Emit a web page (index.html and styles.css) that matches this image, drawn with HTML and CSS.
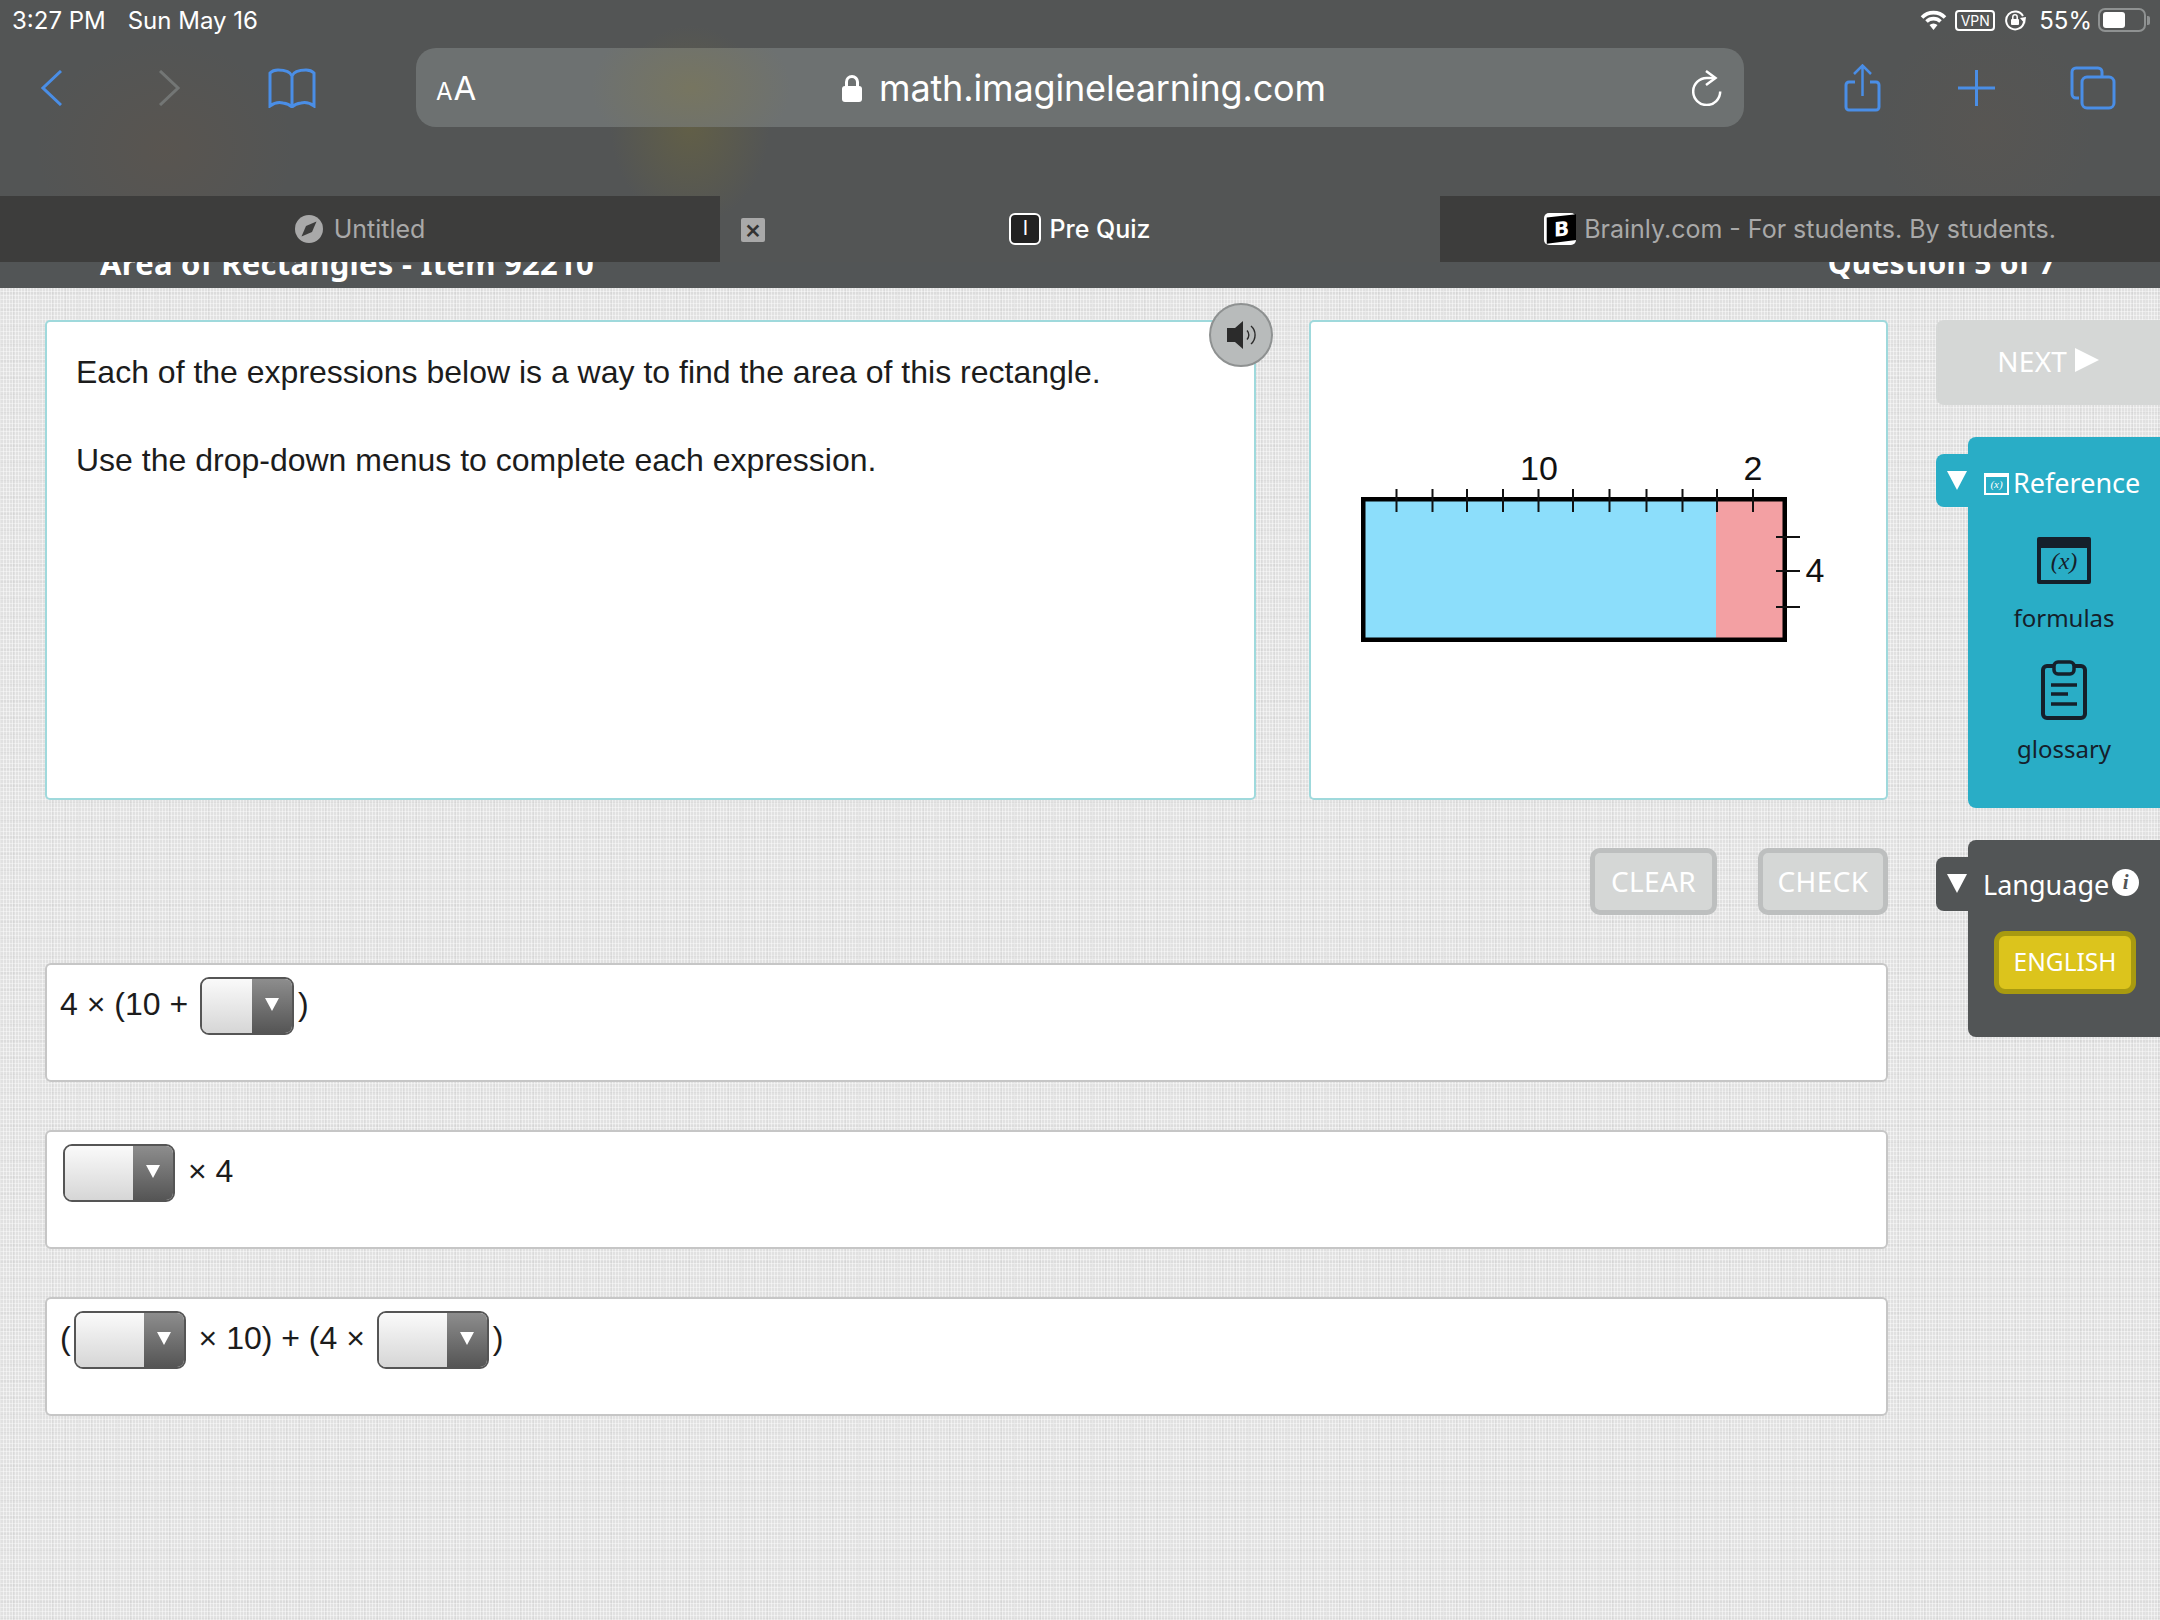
FILE: index.html
```html
<!DOCTYPE html>
<html lang="en">
<head>
<meta charset="utf-8">
<title>Pre Quiz</title>
<link rel="stylesheet" href="styles.css">
</head>
<body>
<div class="chrome">
  <div class="status">
    <span class="clock">3:27 PM</span><span class="date">Sun May 16</span>
    <div class="status-right">
      <svg class="wifi" viewBox="0 0 27 20"><path d="M2 7.500a16 16 0 0 1 23 0M6.500 11.500a10 10 0 0 1 14 0" fill="none" stroke="#fff" stroke-width="3.600"/><path d="M9.500 15a6 6 0 0 1 8 0L13.500 20z" fill="#fff"/></svg>
      <span class="vpn">VPN</span>
      <svg class="rot" viewBox="0 0 22 22"><path d="M19 7A9 9 0 1 0 20 13" fill="none" stroke="#fff" stroke-width="2"/><path d="M16 9l6-1-1 7z" fill="#fff"/><rect x="7" y="10" width="8" height="6" rx="1" fill="#fff"/><path d="M8.800 10V8a2.200 2.200 0 0 1 4.400 0v2" fill="none" stroke="#fff" stroke-width="1.500"/></svg>
      <span class="pct">55%</span>
      <span class="battery"><span class="battery-fill"></span></span><span class="nub"></span>
    </div>
  </div>
  <div class="toolbar">
    <svg class="tb back" viewBox="0 0 21 36"><path d="M20 1 2 18l18 17" fill="none" stroke="#4a8ee6" stroke-width="3"/></svg>
    <svg class="tb forward" viewBox="0 0 22 36"><path d="M2 1l18 17L2 35" fill="none" stroke="#737675" stroke-width="3"/></svg>
    <svg class="tb book" viewBox="0 0 48 40"><path d="M24 8C22 3 16 2 10 2 7 2 4 3 2 5v33c4-3 9-4 13-3 4 .5 7 2 9 4 2-2 5-3.500 9-4 4-1 9 0 13 3V5c-2-2-5-3-8-3-6 0-12 1-14 6zM24 8v31" fill="none" stroke="#4a8ee6" stroke-width="3"/></svg>
    <div class="urlbar">
      <span class="aa"><span class="aa-s">A</span>A</span>
      <span class="url"><svg class="lock" viewBox="0 0 20 28"><path d="M4.500 13V8a5.500 5.500 0 0 1 11 0v5" fill="none" stroke="#fff" stroke-width="3"/><rect y="12" width="20" height="16" rx="3" fill="#fff"/></svg>math.imaginelearning.com</span>
      <svg class="reload" viewBox="0 0 30 36"><path d="M23 8H14.700A13.500 13.500 0 1 0 28.200 21.500" fill="none" stroke="#fff" stroke-width="2.500"/><path d="M14 1l9.500 7L14 15" fill="none" stroke="#fff" stroke-width="2.500"/></svg>
    </div>
    <svg class="tb share" viewBox="0 0 37 48"><path d="M11 18H5a3 3 0 0 0-3 3v22a3 3 0 0 0 3 3h27a3 3 0 0 0 3-3V21a3 3 0 0 0-3-3h-6" fill="none" stroke="#4a8ee6" stroke-width="3"/><path d="M18.500 32V2M10 10l8.500-8.500L27 10" fill="none" stroke="#4a8ee6" stroke-width="2.500"/></svg>
    <svg class="tb plus" viewBox="0 0 37 36"><path d="M18.500 0v36M0 18h37" stroke="#4a8ee6" stroke-width="3"/></svg>
    <svg class="tb tabs-ic" viewBox="0 0 46 44"><path d="M9 32H6a4 4 0 0 1-4-4V6a4 4 0 0 1 4-4h22a4 4 0 0 1 4 4v4" fill="none" stroke="#4a8ee6" stroke-width="3"/><rect x="12" y="11" width="32" height="31" rx="5" fill="none" stroke="#4a8ee6" stroke-width="3"/></svg>
  </div>
  <div class="tabs">
    <div class="tab off">
      <svg class="t-ic" viewBox="0 0 28 28"><circle cx="14" cy="14" r="14" fill="#a9a9a9"/><path d="M21.500 6.500 17 17 6.500 21.500 11 11z" fill="#3d3d3c"/></svg>Untitled
    </div>
    <div class="tab on">
      <span class="close">×</span>
      <span class="quiz-ic">I</span>Pre Quiz
    </div>
    <div class="tab off">
      <span class="brainly-ic"><span class="brainly-band"><span class="brainly-b">B</span></span></span>Brainly.com - For students. By students.
    </div>
  </div>
</div>
<header class="titlebar"><span>Area of Rectangles - Item 92210</span><span class="qnum">Question 5 of 7</span></header>
<main class="main">
  <section class="content">
    <div class="panels">
      <div class="panel prompt">
        <p>Each of the expressions below is a way to find the area of this rectangle.</p>
        <p>Use the drop-down menus to complete each expression.</p>
        <div class="speaker">
          <svg viewBox="0 0 29 28" class="speaker-ic"><path d="M0 7h8l8-7v28l-8-7H0z" fill="#2b2b2b"/><path d="M20 9.500a6.500 6.500 0 0 1 0 9M24 5a12 12 0 0 1 0 18" fill="none" stroke="#2b2b2b" stroke-width="1.400"/></svg>
        </div>
      </div>
      <div class="panel figure">
        <svg class="diagram" viewBox="1311 322 575 476">
          <rect x="1363" y="499" width="353" height="141" fill="#8cdefb"/>
          <rect x="1716" y="499" width="69" height="141" fill="#f3a0a3"/>
          <rect x="1363.250" y="499.250" width="421.500" height="140.500" fill="none" stroke="#000" stroke-width="4.500"/>
          <path d="M1396.500 489v23M1432.500 489v23M1467 489v23M1503 489v23M1538.500 489v23M1573 489v23M1609.500 489v23M1646.500 489v23M1682.500 489v23M1717 489v23M1753 489v23M1776 537h24M1776 571h24M1776 607h24" stroke="#111" stroke-width="2"/>
          <text x="1539" y="480" class="fig-label">10</text>
          <text x="1753" y="480" class="fig-label">2</text>
          <text x="1815" y="582" class="fig-label">4</text>
        </svg>
      </div>
    </div>
    <div class="actions">
      <button class="act clear">CLEAR</button>
      <button class="act check">CHECK</button>
    </div>
    <div class="answers">
      <div class="answer">4 × (10 + <span class="dd narrow"><span class="dd-l"></span><span class="dd-r"></span></span>)</div>
      <div class="answer"><span class="dd"><span class="dd-l"></span><span class="dd-r"></span></span> × 4</div>
      <div class="answer">(<span class="dd"><span class="dd-l"></span><span class="dd-r"></span></span> × 10) + (4 × <span class="dd"><span class="dd-l"></span><span class="dd-r"></span></span>)</div>
    </div>
  </section>
  <aside class="side">
    <button class="next">NEXT <span class="next-tri"></span></button>
    <div class="drawer ref">
      <div class="handle"><span class="tri"></span></div>
      <div class="sheet">
        <h2 class="sheet-title ref-title"><span class="mini-x"><i>(x)</i></span>Reference</h2>
        <div class="tool">
          <span class="formula-ic"><i>(x)</i></span>
          <span class="tool-name">formulas</span>
        </div>
        <div class="tool tool-g">
          <svg class="clip" viewBox="0 0 46 62"><path d="M13 8H6a4 4 0 0 0-4 4v44a4 4 0 0 0 4 4h34a4 4 0 0 0 4-4V12a4 4 0 0 0-4-4h-7" fill="none" stroke="#15202b" stroke-width="4"/><rect x="13" y="4" width="20" height="12" rx="4" fill="none" stroke="#15202b" stroke-width="3.500"/><path d="M10 27h26M10 36h17M10 46h26" stroke="#15202b" stroke-width="3.500"/></svg>
          <span class="tool-name">glossary</span>
        </div>
      </div>
    </div>
    <div class="drawer lang">
      <div class="handle"><span class="tri"></span></div>
      <div class="sheet">
        <h2 class="sheet-title lang-title">Language<span class="info">i</span></h2>
        <button class="english">ENGLISH</button>
      </div>
    </div>
  </aside>
</main>
</body>
</html>
```
FILE: styles.css
```css
* { box-sizing: border-box; }
html, body { margin: 0; padding: 0; }
body {
  width: 2160px;
  height: 1620px;
  overflow: hidden;
  background-color: #e1e1e1;
  background-image:
    repeating-linear-gradient(90deg, rgba(0,0,0,.03) 0 1px, transparent 1px 13px),
    repeating-linear-gradient(90deg, rgba(255,255,255,.45) 0 1px, transparent 1px 3px),
    repeating-linear-gradient(0deg, rgba(0,0,0,.025) 0 2px, transparent 2px 17px),
    repeating-linear-gradient(0deg, rgba(255,255,255,.4) 0 1px, transparent 1px 4px);
  font-family: "Liberation Sans", Arial, sans-serif;
  color: #1c1c1c;
}
button { font: inherit; cursor: default; }

/* browser chrome */
.chrome {
  height: 262px;
  position: relative;
  z-index: 2;
  background-color: #535555;
  background-image:
    radial-gradient(ellipse 130px 110px at 165px 150px, rgba(120,85,55,.16), transparent),
    radial-gradient(ellipse 80px 100px at 690px 125px, rgba(120,110,50,.4), transparent),
    radial-gradient(ellipse 110px 110px at 1985px 130px, rgba(115,90,70,.14), transparent);
  font-family: Inter, "Liberation Sans", sans-serif;
  color: #fff;
}
.status {
  height: 48px;
  display: flex;
  align-items: center;
  padding: 0 10px 8px 12px;
  font-size: 24px;
}
.date { margin-left: 22px; }
.status-right { margin-left: auto; display: flex; align-items: center; }
.wifi { width: 27px; height: 20px; }
.vpn {
  width: 40px; height: 21px;
  margin-left: 8px;
  border: 2px solid #fff;
  border-radius: 4px;
  font-size: 14px;
  line-height: 17px;
  text-align: center;
}
.rot { width: 22px; height: 22px; margin-left: 9px; }
.pct { margin-left: 13px; font-size: 24px; }
.battery {
  width: 48px; height: 24px;
  margin-left: 6px;
  padding: 2px 3px;
  border: 2px solid #8f9292;
  border-radius: 7px;
  display: block;
}
.battery-fill { display: block; width: 22px; height: 16px; background: #fff; border-radius: 3px; }
.nub { width: 3px; height: 9px; margin-left: 1px; background: #8f9292; border-radius: 0 2px 2px 0; }

.toolbar { height: 79px; display: flex; align-items: center; padding-left: 41px; }
.tb { flex: none; display: block; }
.back { width: 21px; height: 36px; }
.forward { width: 22px; height: 36px; margin-left: 96px; }
.book { width: 48px; height: 40px; margin-left: 88px; }
.urlbar {
  flex: none;
  width: 1328px;
  height: 79px;
  margin-left: 100px;
  padding: 0 22px 0 20px;
  border-radius: 20px;
  display: grid;
  grid-template-columns: 406px 1fr auto;
  align-items: center;
  background-color: #6d7171;
  background-image: radial-gradient(ellipse 100px 70px at 275px 40px, rgba(125,120,85,.6), transparent);
}
.aa { font-size: 33px; }
.aa-s { font-size: 24px; margin-right: 1px; }
.url { display: flex; align-items: center; font-size: 36px; letter-spacing: -.15px; white-space: nowrap; }
.lock { width: 20px; height: 28px; margin-right: 17px; }
.reload { width: 30px; height: 36px; }
.share { width: 37px; height: 48px; margin-left: 100px; }
.plus { width: 37px; height: 36px; margin-left: 77px; }
.tabs-ic { width: 46px; height: 44px; margin-left: 75px; }

.tabs { height: 66px; margin-top: 69px; display: flex; font-size: 25px; }
.tab {
  flex: 1;
  position: relative;
  display: flex;
  align-items: center;
  justify-content: center;
  white-space: nowrap;
}
.tab.off { background: #3d3d3c; color: #a9a9a9; }
.tab.on { font-weight: 500; }
.t-ic { width: 28px; height: 28px; margin-right: 11px; }
.close {
  position: absolute;
  left: 21px; top: 22px;
  width: 24px; height: 24px;
  border-radius: 2px;
  background: #a9a9a9;
  color: #333;
  font-size: 26px;
  line-height: 22px;
  text-align: center;
}
.quiz-ic {
  width: 32px; height: 32px;
  margin-right: 8px;
  border: 2px solid #fff;
  border-radius: 6px;
  background: #222;
  font-size: 20px;
  line-height: 27px;
  text-align: center;
  font-weight: 400;
}
.brainly-ic {
  width: 32px; height: 32px;
  margin-right: 8px;
  border-radius: 5px;
  background: #fff;
  display: block;
}
.brainly-band {
  display: flex;
  width: 100%; height: 100%;
  align-items: center;
  justify-content: center;
  padding-left: 2px;
  background: #000;
  clip-path: polygon(8% 14%, 100% 4%, 100% 84%, 8% 96%);
  color: #fff;
}
.brainly-b { font: 700 20px "DejaVu Sans", sans-serif; transform: skewY(-6deg); }

/* quiz header */
.titlebar {
  height: 26px;
  overflow: hidden;
  display: flex;
  justify-content: space-between;
  padding: 0 104px 0 100px;
  background: #525556;
  color: #fff;
  font: 700 31px/26px "Noto Sans", sans-serif;
  letter-spacing: .25px;
}
.titlebar span { margin-top: -12px; display: block; white-space: nowrap; }
.titlebar .qnum { font-size: 30px; }

/* layout */
.main { display: flex; padding: 32px 0 0 45px; }
.content { width: 1843px; flex: none; }
.side { width: 224px; margin-left: 48px; flex: none; font-family: "Noto Sans", sans-serif; }

.panels { display: flex; gap: 53px; height: 480px; }
.panel {
  background: #fff;
  border: 2px solid #9fd9dc;
  border-radius: 5px;
  position: relative;
}
.prompt { width: 1211px; padding: 28px 29px; font-size: 32px; line-height: 44px; }
.prompt p { margin: 0 0 44px; }
.figure { width: 579px; }
.diagram { display: block; width: 575px; height: 476px; }
.fig-label { font: 34px "Liberation Sans", sans-serif; text-anchor: middle; fill: #111; }
.speaker {
  position: absolute;
  right: -19px; top: -19px;
  width: 64px; height: 64px;
  border-radius: 50%;
  background: #b8bbbb;
  border: 2px solid #8e9191;
  display: flex;
  align-items: center;
  justify-content: center;
}
.speaker-ic { width: 29px; height: 28px; }

.actions { display: flex; justify-content: flex-end; gap: 41px; margin-top: 48px; }
.act {
  height: 67px;
  border: 5px solid #bdbfbf;
  border-radius: 10px;
  background: #d5d7d6;
  color: #fff;
  font-family: "Noto Sans", sans-serif;
  font-size: 28px;
  padding: 0 0 2px;
  letter-spacing: .4px;
}
.clear { width: 127px; }
.check { width: 130px; }

.answers { margin-top: 48px; display: flex; flex-direction: column; gap: 48px; }
.answer {
  height: 119px;
  padding: 10px 13px 0;
  background: #fff;
  border: 2px solid #c6c6c6;
  border-radius: 6px;
  font-size: 32px;
  line-height: 58px;
  white-space: pre;
}
.dd {
  display: inline-flex;
  vertical-align: middle;
  position: relative;
  top: -1px;
  height: 58px;
  margin: 0 4px 0 3px;
  border: 2px solid #555;
  border-radius: 9px;
  overflow: hidden;
}
.dd-l { width: 68px; background: linear-gradient(#fafafa, #d6d6d6); }
.dd.narrow .dd-l { width: 50px; }
.dd-r {
  width: 40px;
  background: linear-gradient(#8d8d8d, #555);
  display: flex;
  align-items: center;
  justify-content: center;
}
.dd-r::after {
  content: "";
  border-left: 7px solid transparent;
  border-right: 7px solid transparent;
  border-top: 13px solid #fff;
  margin-top: -2px;
}

/* side column */
.next {
  display: block;
  width: 224px; height: 85px;
  border: 0;
  border-radius: 8px 0 0 8px;
  background: #d5d7d6;
  color: #fff;
  font-size: 28px;
  padding: 0 0 4px;
  letter-spacing: .3px;
}
.next-tri {
  display: inline-block;
  border-left: 24px solid #fff;
  border-top: 12px solid transparent;
  border-bottom: 12px solid transparent;
  vertical-align: 0;
}
.drawer { display: flex; margin-top: 32px; color: #fff; }
.handle {
  width: 32px;
  border-radius: 8px 0 0 8px;
  padding: 17px 0 0 11px;
  flex: none;
}
.tri {
  display: block;
  width: 0;
  border-left: 10px solid transparent;
  border-right: 10px solid transparent;
  border-top: 19px solid #fff;
}
.sheet { width: 192px; border-radius: 8px 0 0 8px; }
.sheet-title { margin: 0; font-weight: 400; font-size: 27px; display: flex; align-items: center; white-space: nowrap; }

.ref .handle { height: 53px; margin-top: 17px; background: #29adc6; }
.ref .sheet { height: 371px; background: #29adc6; text-align: center; padding-top: 25px; }
.ref-title { padding-left: 16px; height: 40px; }
.ref-title .mini-x { margin-top: 3px; }
.mini-x {
  width: 25px; height: 22px;
  margin-right: 4px;
  border: 2px solid #fff;
  border-top-width: 4px;
  font: 11px/14px "Liberation Serif", serif;
  text-align: center;
}
.tool { display: flex; flex-direction: column; align-items: center; color: #15202b; font-size: 24px; }
.tool:first-of-type { margin-top: 35px; }
.formula-ic {
  width: 54px; height: 47px;
  border: 4px solid #15202b;
  border-top-width: 11px;
  border-radius: 2px;
  font: 24px/27px "Liberation Serif", serif;
}
.tool-name { line-height: 36px; margin-top: 16px; }
.tool-g { margin-top: 22px; }
.clip { width: 46px; height: 62px; }
.tool-g .tool-name { margin-top: 11px; }

.lang .handle { height: 54px; margin-top: 17px; background: #525556; }
.lang .sheet { height: 197px; background: #525556; padding-top: 21px; }
.lang-title { padding-left: 15px; height: 46px; }
.info {
  width: 27px; height: 27px;
  margin: -4px 0 0 3px;
  border-radius: 50%;
  background: #fff;
  color: #525556;
  font: italic 700 21px/27px "Liberation Serif", serif;
  text-align: center;
}
.english {
  display: block;
  width: 142px; height: 63px;
  margin: 24px 0 0 26px;
  border: 5px solid #a89a10;
  border-radius: 11px;
  background: #dcc41c;
  color: #fff;
  font-family: "Noto Sans", sans-serif;
  font-size: 24.500px;
  padding: 0 0 2px;
}
```
